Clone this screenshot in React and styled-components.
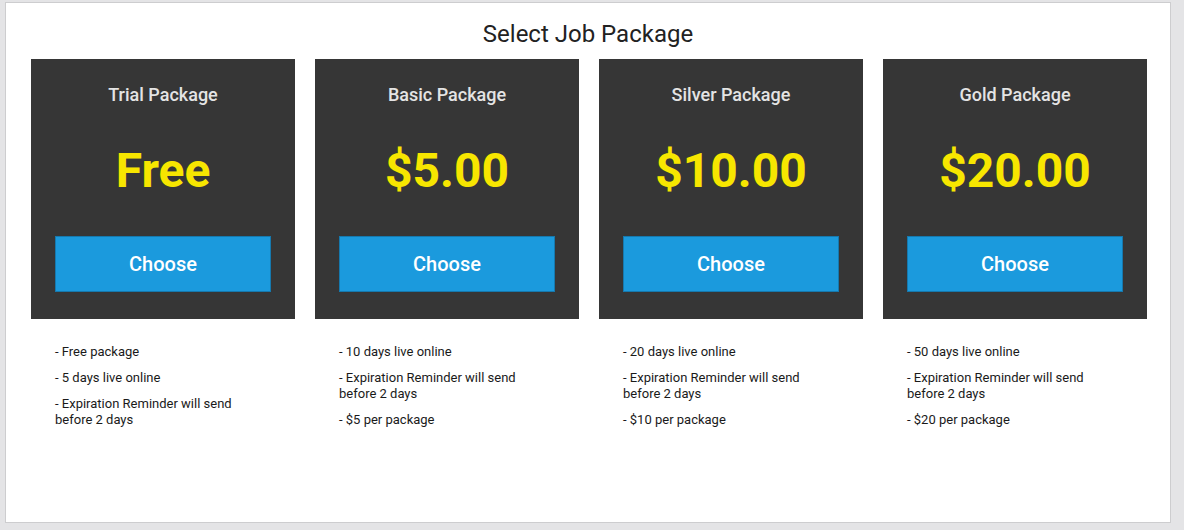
import styled, { createGlobalStyle } from "styled-components";

const GlobalStyle = createGlobalStyle`
  html, body {
    margin: 0;
    padding: 0;
    background: #e4e4e6;
    font-family: Roboto, "Liberation Sans", Arial, sans-serif;
  }
`;

const packages = [
  {
    name: "Trial Package",
    price: "Free",
    features: ["- Free package", "- 5 days live online", "- Expiration Reminder will send before 2 days"],
  },
  {
    name: "Basic Package",
    price: "$5.00",
    features: ["- 10 days live online", "- Expiration Reminder will send before 2 days", "- $5 per package"],
  },
  {
    name: "Silver Package",
    price: "$10.00",
    features: ["- 20 days live online", "- Expiration Reminder will send before 2 days", "- $10 per package"],
  },
  {
    name: "Gold Package",
    price: "$20.00",
    features: ["- 50 days live online", "- Expiration Reminder will send before 2 days", "- $20 per package"],
  },
];

function App() {
  return (
    <>
      <GlobalStyle />
      <Page>
        <Panel>
          <Heading>Select Job Package</Heading>
          <Grid>
            {packages.map((p) => (
              <Column key={p.name}>
                <Card>
                  <CardTitle>{p.name}</CardTitle>
                  <Price>{p.price}</Price>
                  <ChooseButton>Choose</ChooseButton>
                </Card>
                <Features>
                  {p.features.map((f) => (
                    <Feature key={f}>{f}</Feature>
                  ))}
                </Features>
              </Column>
            ))}
          </Grid>
        </Panel>
      </Page>
    </>
  );
}

const Page = styled.div`
  width: 1184px;
  height: 530px;
  padding: 2px 0 0 5px;
  box-sizing: border-box;
`;

const Panel = styled.div`
  width: 1166px;
  height: 521px;
  box-sizing: border-box;
  background: #ffffff;
  border: 1px solid #cdcdcf;
  padding: 0 25px;
`;

const Heading = styled.h1`
  margin: 0;
  padding-top: 17px;
  height: 56px;
  box-sizing: border-box;
  text-align: center;
  font-size: 24px;
  font-weight: 400;
  line-height: 28px;
  color: #222222;
`;

const Grid = styled.div`
  display: grid;
  grid-template-columns: repeat(4, 1fr);
  column-gap: 20px;
`;

const Column = styled.div`
  display: flex;
  flex-direction: column;
`;

const Card = styled.div`
  height: 260px;
  background: #363636;
  display: flex;
  flex-direction: column;
  align-items: center;
  padding: 24px 24px 0;
  box-sizing: border-box;
`;

const CardTitle = styled.div`
  font-size: 18px;
  font-weight: 500;
  line-height: 24px;
  color: #e4e4e4;
`;

const Price = styled.div`
  margin-top: 36px;
  font-size: 48px;
  font-weight: 700;
  line-height: 56px;
  color: #f7e600;
`;

const ChooseButton = styled.button`
  margin-top: 37px;
  width: 216px;
  height: 56px;
  background: #1b9add;
  border: 1px solid #1679ae;
  color: #ffffff;
  font-family: inherit;
  font-size: 20px;
  font-weight: 500;
  cursor: pointer;
`;

const Features = styled.ul`
  list-style: none;
  margin: 0;
  padding: 25px 24px 0;
  width: 216px;
  display: flex;
  flex-direction: column;
  gap: 10px;
`;

const Feature = styled.li`
  font-size: 13px;
  line-height: 16px;
  color: #1a1a1a;
`;

export default App;
